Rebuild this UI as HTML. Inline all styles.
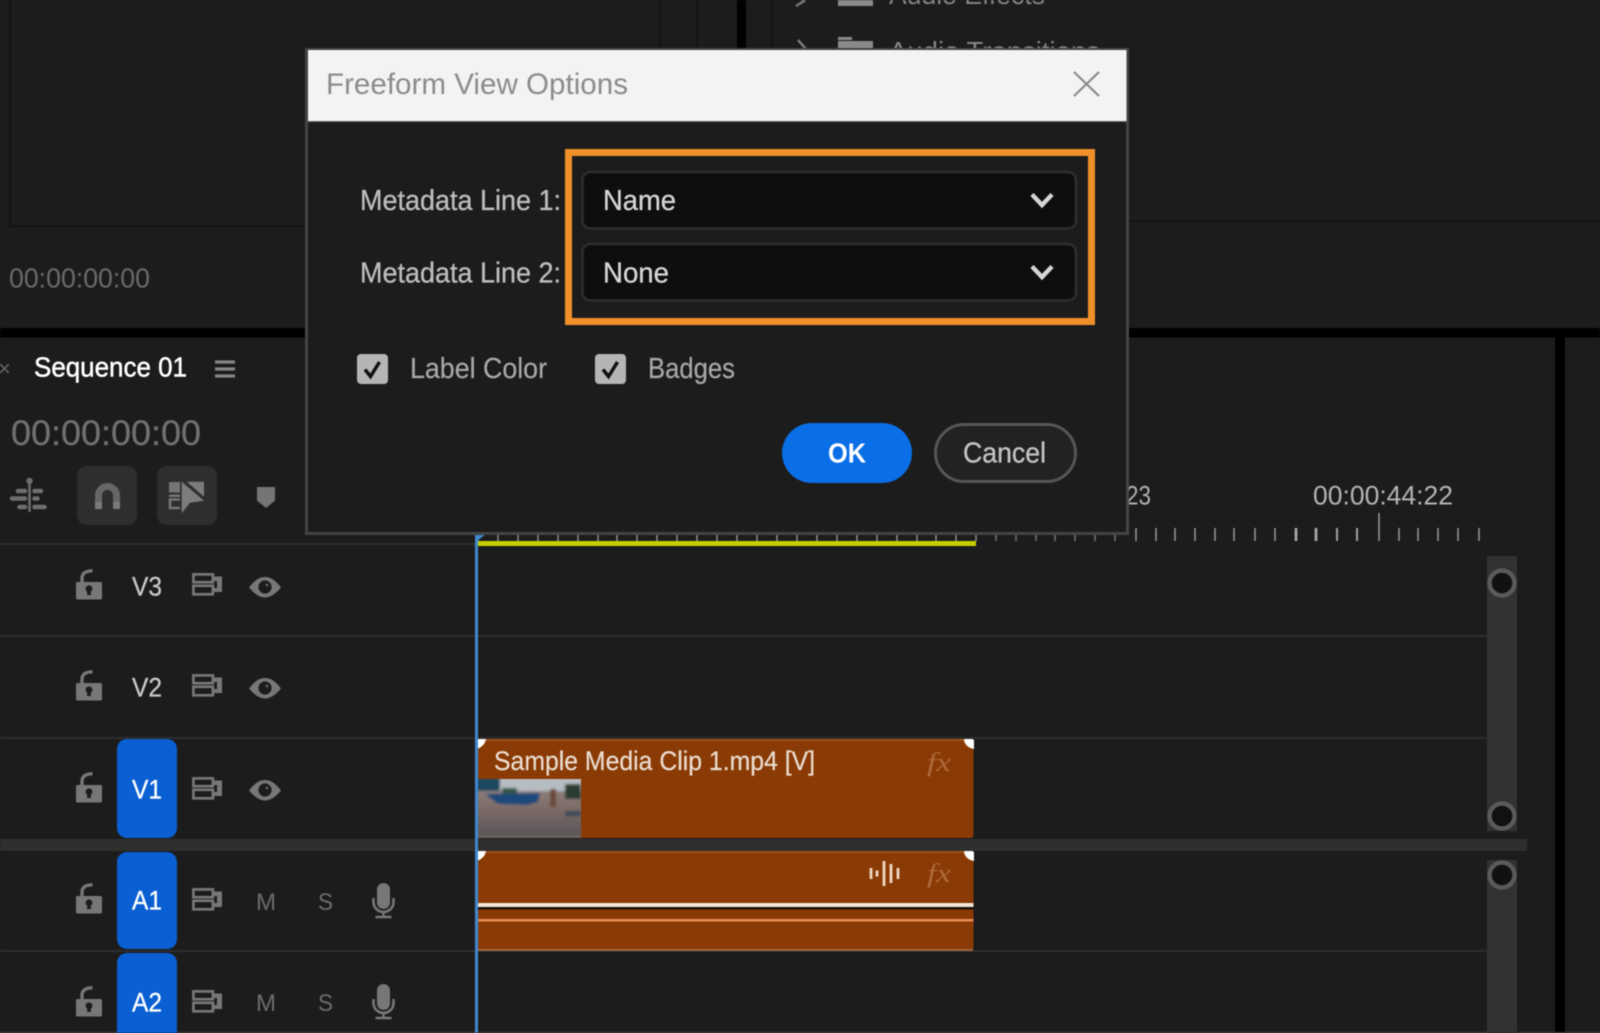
<!DOCTYPE html>
<html><head><meta charset="utf-8"><title>Freeform View Options</title>
<style>
html,body{margin:0;padding:0;background:#1c1c1c;width:1600px;height:1033px;overflow:hidden}
svg{display:block;filter:blur(.45px)}
text{font-family:"Liberation Sans",sans-serif}
</style></head><body>
<svg width="1600" height="1033" viewBox="0 0 1600 1033" xmlns="http://www.w3.org/2000/svg">
<defs>
<g id="lock"><path d="M6 14V9.500C6 4.500 9.500 1.800 16.500 1.800" fill="none" stroke="#777" stroke-width="3.400"/><rect x="0" y="13" width="26" height="17.500" rx="1.500" fill="#777"/><circle cx="13" cy="19.800" r="3.400" fill="#1c1c1c"/><path d="M11.500 20H14.500L15 26H11Z" fill="#1c1c1c"/></g>
<g id="sync"><g fill="none" stroke="#777" stroke-width="2.700"><rect x="1.400" y="1.400" width="19.500" height="7.800"/><rect x="1.400" y="12.800" width="19.500" height="8.500"/></g><path d="M20.500 3.500H30V19H20.500V15H25V8H20.500Z" fill="#777"/></g>
<g id="eye"><path d="M0 11C6 3 11 .5 16 .5C21 .5 26 3 32 11C26 18 21 21 16 21C11 21 6 18 0 11Z" fill="#777"/><circle cx="16" cy="10.500" r="6.600" fill="#1c1c1c"/><circle cx="18" cy="8.500" r="1.200" fill="#777"/></g>
<g id="mic"><rect x="5" y="0" width="13" height="26" rx="6.500" fill="#777"/><path d="M1.500 15V19A10 10 0 0 0 21.500 19V15" fill="none" stroke="#777" stroke-width="2.600"/><path d="M11.500 29V33.500M3.500 34H19.500" stroke="#777" stroke-width="2.400" fill="none"/></g>
<linearGradient id="gr" x1="0" y1="0" x2="0" y2="1"><stop offset="0" stop-color="#9a8d8c"/><stop offset=".5" stop-color="#7c6b66"/><stop offset=".88" stop-color="#5b5659"/><stop offset=".95" stop-color="#857668"/><stop offset="1" stop-color="#7a6c62"/></linearGradient>
<filter id="bl" x="-5%" y="-5%" width="110%" height="110%"><feGaussianBlur stdDeviation="1.300"/></filter>
<clipPath id="th"><rect x="478" y="779" width="103" height="59"/></clipPath>
</defs>

<rect width="1600" height="1033" fill="#1c1c1c"/>

<!-- top panels -->
<path d="M10 0V226H305" fill="none" stroke="#131313" stroke-width="2"/>
<rect x="659" y="0" width="2" height="50" fill="#131313"/>
<rect x="696" y="0" width="2" height="50" fill="#131313"/>
<rect x="771" y="0" width="2" height="50" fill="#131313"/>
<rect x="737" y="0" width="9" height="50" fill="#000"/>
<rect x="1127" y="220" width="473" height="2" fill="#151515"/>
<text x="9" y="287.500" font-size="28" fill="#6a6a6a" textLength="141" lengthAdjust="spacingAndGlyphs">00:00:00:00</text>

<!-- audio list behind dialog -->
<path d="M796 -5L804 1L796 6" fill="none" stroke="#777" stroke-width="2.500"/>
<rect x="838" y="-8" width="35" height="14" fill="#8a8a8a"/>
<text x="889" y="4" font-size="26" fill="#858585" textLength="156" lengthAdjust="spacingAndGlyphs">Audio Effects</text>
<path d="M798 40L806 49" fill="none" stroke="#777" stroke-width="2.500"/>
<rect x="838" y="41" width="35" height="12" fill="#8a8a8a"/><rect x="838" y="37" width="14" height="3" fill="#8a8a8a"/>
<text x="889" y="60" font-size="26" fill="#858585" textLength="211" lengthAdjust="spacingAndGlyphs">Audio Transitions</text>

<!-- dividers -->
<rect x="0" y="328" width="1600" height="9.500" fill="#000"/>
<rect x="1555" y="337" width="10" height="696" fill="#000"/>

<!-- timeline header -->
<text x="-2" y="376" font-size="22" fill="#666">×</text>
<text x="34" y="376.500" font-size="28" fill="#fff" stroke="#fff" stroke-width=".5" textLength="153" lengthAdjust="spacingAndGlyphs">Sequence 01</text>
<path d="M215 362H235M215 369H235M215 376H235" stroke="#858585" stroke-width="3.200"/>
<text x="11" y="445" font-size="35" fill="#707070" stroke="#707070" stroke-width=".3" textLength="190" lengthAdjust="spacingAndGlyphs">00:00:00:00</text>

<!-- tools -->
<rect x="77" y="466" width="60" height="59" rx="10" fill="#2e2e2e"/>
<rect x="157" y="466" width="60" height="59" rx="10" fill="#2e2e2e"/>
<path d="M29.500 480V512" stroke="#6e6e6e" stroke-width="2.500"/>
<circle cx="29.500" cy="481" r="3.200" fill="#6e6e6e"/>
<path d="M18 491H25M12 498.500H25M19.500 507H25M34.500 491H41M34.500 498.500H37.500M34.500 507H44.500" stroke="#6e6e6e" stroke-width="4.500" stroke-linecap="round" fill="none"/>
<path d="M98.500 509V495.500A9 9 0 0 1 116.500 495.500V509" fill="none" stroke="#666" stroke-width="7"/>
<path d="M98.500 509V502M116.500 509V502" fill="none" stroke="#7a7a7a" stroke-width="7"/>
<rect x="169" y="482" width="11" height="10.500" fill="#757575"/>
<rect x="169" y="494.500" width="11" height="2.500" fill="#757575"/>
<path d="M180 499.500H170V508H180" stroke="#757575" stroke-width="2.600" fill="none"/>
<path d="M181.700 481.700L204 500.700L190 502.700L181.700 513.300Z" fill="#7c7c7c"/>
<path d="M186.700 481.700H204V496.700Z" fill="#7c7c7c"/>
<path d="M257 487H275V500.500L266 508L257 500.500Z" fill="#757575"/>

<!-- ruler -->
<text x="1126" y="504.500" font-size="27" fill="#b0b0b0" textLength="25" lengthAdjust="spacingAndGlyphs">23</text>
<text x="1313" y="504.500" font-size="27" fill="#b4b4b4" textLength="140" lengthAdjust="spacingAndGlyphs">00:00:44:22</text>
<path d="M478 534v7M498 534v7M518 534v7M538 534v7M558 534v7M578 534v7M598 534v7M617 534v7M637 534v7M657 534v7M677 534v7M697 534v7M717 534v7M737 534v7M757 534v7M777 534v7M797 534v7M817 534v7M837 534v7M857 534v7M877 534v7M897 534v7M917 534v7M936 534v7M956 534v7M976 534v7" stroke="#8f8f8f" stroke-width="1.500"/>
<path d="M996 534v7M1016 534v7M1036 534v7M1055 534v7M1075 534v7M1095 534v7M1115 534v7" stroke="#777" stroke-width="1.500"/>
<path d="M1136 528v13M1156 528v13M1175 528v13M1195 528v13M1215 528v13M1234 528v13M1255 528v13M1275 528v13M1399 528v13M1418 528v13M1438 528v13M1458 528v13M1479 528v13M1379 513v28" stroke="#9a9a9a" stroke-width="1.500"/>
<path d="M1337 528v13M1357 528v13" stroke="#a0a0a0" stroke-width="2"/>
<path d="M1296 528v13M1316 528v13" stroke="#a5a5a5" stroke-width="2.800"/>
<rect x="477" y="541" width="499" height="5" fill="#c6d000"/>

<!-- track lines -->
<g fill="#2d2d2d">
<rect x="0" y="543" width="475" height="2"/>
<rect x="0" y="635" width="1487" height="2"/>
<rect x="0" y="737" width="1487" height="2"/>
<rect x="0" y="950" width="1487" height="2"/>
</g>
<rect x="0" y="839" width="1527" height="12" fill="#2f2f2f"/>
<rect x="0" y="1032" width="1600" height="1" fill="#4a4a4a"/>

<!-- scrollbar -->
<rect x="1487" y="556" width="30" height="275" fill="#323232"/>
<rect x="1487" y="860" width="30" height="173" fill="#323232"/>
<g fill="#111" stroke="#5a5a5a" stroke-width="4.500">
<circle cx="1502" cy="583" r="12.500"/>
<circle cx="1502" cy="816" r="12.500"/>
<circle cx="1502" cy="875" r="12.500"/>
</g>

<!-- clips -->
<path d="M477 739H970Q973.500 739 973.500 743V834Q973.500 838 970 838H477Z" fill="#8a3a04"/>
<rect x="477" y="739" width="496" height="2" fill="#9c5120"/>
<path d="M477 851H970Q973.500 851 973.500 855V947Q973.500 951 970 951H477Z" fill="#8a3a04"/>
<rect x="477" y="851" width="496" height="2" fill="#9c5120"/>
<rect x="477" y="949" width="496" height="2" fill="#a0673c"/>
<rect x="477" y="903" width="496.500" height="4" fill="#f3e6d8"/>
<rect x="477" y="907" width="496.500" height="2.500" fill="#1a0f05"/>
<rect x="477" y="919" width="496.500" height="2.500" fill="#e88c52"/>
<!-- thumbnail -->
<g clip-path="url(#th)"><g filter="url(#bl)">
<rect x="474" y="775" width="112" height="68" fill="url(#gr)"/>
<rect x="474" y="775" width="112" height="16" fill="#b6bdc2"/>
<rect x="474" y="775" width="26" height="16" fill="#1f4a5e"/>
<path d="M485 794L540 793L538 802L528 805L498 804Z" fill="#1d4a7a"/>
<rect x="502" y="788" width="15" height="6" fill="#36554c"/>
<rect x="565" y="784" width="16" height="15" fill="#2a3a30"/>
<rect x="550" y="789" width="6" height="18" fill="#6b4a3a"/>
<rect x="565" y="811" width="16" height="5" fill="#3a4a5a"/>
</g></g>
<text x="494" y="770" font-size="27" fill="#eadccf" stroke="#eadccf" stroke-width=".2" textLength="321" lengthAdjust="spacingAndGlyphs">Sample Media Clip 1.mp4 [V]</text>
<text x="927" y="771" font-size="26" font-style="italic" fill="#ad6a3a" style="font-family:'Liberation Serif',serif" textLength="24" lengthAdjust="spacingAndGlyphs">fx</text>
<text x="927" y="882" font-size="26" font-style="italic" fill="#ad6a3a" style="font-family:'Liberation Serif',serif" textLength="24" lengthAdjust="spacingAndGlyphs">fx</text>
<path d="M871 868v11M877 870.500v6M884 861v25M891 864v19M898 868v11" stroke="#f0d8c4" stroke-width="2.800"/>
<path d="M477 739H486C485 744 482 747 477 749Z" fill="#fff"/>
<path d="M477 851H486C485 856 482 859 477 861Z" fill="#fff"/>
<path d="M974 749V741C974 740 973 739 972 739H964C964 744 968 748 974 749Z" fill="#fff"/>
<path d="M974 861V853C974 852 973 851 972 851H964C964 856 968 860 974 861Z" fill="#fff"/>
<rect x="475" y="534" width="3" height="499" fill="#3f87cf"/>
<path d="M476 534H486L477 541Z" fill="#3f87cf"/>

<!-- track headers -->
<rect x="117" y="739" width="60" height="99" rx="10" fill="#0a5fd2"/>
<rect x="117" y="852" width="60" height="97" rx="10" fill="#0a5fd2"/>
<rect x="117" y="953" width="60" height="100" rx="10" fill="#0a5fd2"/>
<use href="#lock" x="76" y="569"/><use href="#lock" x="76" y="670"/><use href="#lock" x="76" y="772"/><use href="#lock" x="76" y="883"/><use href="#lock" x="76" y="986"/>
<use href="#sync" x="192" y="573"/><use href="#sync" x="192" y="674"/><use href="#sync" x="192" y="777"/><use href="#sync" x="192" y="888"/><use href="#sync" x="192" y="990"/>
<use href="#eye" x="249" y="576.500"/><use href="#eye" x="249" y="677.500"/><use href="#eye" x="249" y="779.500"/>
<use href="#mic" x="372" y="883"/><use href="#mic" x="372" y="984"/>
<g font-size="27">
<text x="132" y="595.500" fill="#c8c8c8" stroke="#c8c8c8" stroke-width=".3" textLength="30" lengthAdjust="spacingAndGlyphs">V3</text>
<text x="132" y="696.500" fill="#c8c8c8" stroke="#c8c8c8" stroke-width=".3" textLength="30" lengthAdjust="spacingAndGlyphs">V2</text>
<text x="132" y="798.500" fill="#fff" stroke="#fff" stroke-width=".3" textLength="30" lengthAdjust="spacingAndGlyphs">V1</text>
<text x="132" y="909.500" fill="#fff" stroke="#fff" stroke-width=".3" textLength="30" lengthAdjust="spacingAndGlyphs">A1</text>
<text x="132" y="1011.500" fill="#fff" stroke="#fff" stroke-width=".3" textLength="30" lengthAdjust="spacingAndGlyphs">A2</text>
</g>
<g font-size="24" fill="#6c6c6c">
<text x="256" y="910" textLength="20" lengthAdjust="spacingAndGlyphs">M</text>
<text x="256" y="1011" textLength="20" lengthAdjust="spacingAndGlyphs">M</text>
<text x="318" y="910" textLength="15" lengthAdjust="spacingAndGlyphs">S</text>
<text x="318" y="1011" textLength="15" lengthAdjust="spacingAndGlyphs">S</text>
</g>

<!-- dialog -->
<rect x="306.500" y="49.500" width="821" height="484" fill="#1c1c1c" stroke="#444" stroke-width="3"/>
<rect x="308" y="50" width="818.500" height="71" fill="#f3f3f3"/>
<rect x="308" y="121" width="818.500" height="1" fill="#666"/>
<text x="326" y="94" font-size="30" fill="#8c8c8c" textLength="302" lengthAdjust="spacingAndGlyphs">Freeform View Options</text>
<path d="M1074 72L1099 96M1099 72L1074 96" stroke="#8a8a8a" stroke-width="2.200" fill="none"/>

<text x="360" y="210" font-size="29" fill="#bdbdbd" stroke="#bdbdbd" stroke-width=".3" textLength="201" lengthAdjust="spacingAndGlyphs">Metadata Line 1:</text>
<text x="360" y="282.500" font-size="29" fill="#bdbdbd" stroke="#bdbdbd" stroke-width=".3" textLength="201" lengthAdjust="spacingAndGlyphs">Metadata Line 2:</text>

<rect x="582.500" y="172" width="493.500" height="56.500" rx="8" fill="#0e0e0e" stroke="#2e2e2e" stroke-width="2.500"/>
<rect x="582.500" y="244" width="493.500" height="56.500" rx="8" fill="#0e0e0e" stroke="#2e2e2e" stroke-width="2.500"/>
<text x="603" y="210" font-size="29" fill="#d6d6d6" stroke="#d6d6d6" stroke-width=".3" textLength="73" lengthAdjust="spacingAndGlyphs">Name</text>
<text x="603" y="282.500" font-size="29" fill="#d6d6d6" stroke="#d6d6d6" stroke-width=".3" textLength="66" lengthAdjust="spacingAndGlyphs">None</text>
<path d="M1032 194.500L1042 205L1052 194.500M1032 266.500L1042 277L1052 266.500" fill="none" stroke="#d6d6d6" stroke-width="4.400"/>

<rect x="568.500" y="152.500" width="523" height="169" fill="none" stroke="#f0902a" stroke-width="7"/>

<rect x="357" y="354" width="31" height="30" rx="4" fill="#b5b5b5"/>
<rect x="595" y="354" width="31" height="30" rx="4" fill="#b5b5b5"/>
<path d="M365 369.500L370.500 376.500L379.500 362M603 369.500L608.500 376.500L617.500 362" fill="none" stroke="#111" stroke-width="3.500"/>
<text x="410" y="378" font-size="29" fill="#a8a8a8" stroke="#a8a8a8" stroke-width=".2" textLength="137" lengthAdjust="spacingAndGlyphs">Label Color</text>
<text x="648" y="378" font-size="29" fill="#a8a8a8" stroke="#a8a8a8" stroke-width=".2" textLength="87" lengthAdjust="spacingAndGlyphs">Badges</text>

<rect x="782" y="423" width="130" height="60" rx="30" fill="#0a6ee6"/>
<text x="828" y="462.500" font-size="28" font-weight="bold" fill="#fff" textLength="38" lengthAdjust="spacingAndGlyphs">OK</text>
<rect x="935.500" y="424.500" width="140" height="57" rx="28.500" fill="#222" stroke="#565656" stroke-width="3"/>
<text x="963" y="462.500" font-size="29" fill="#c4c4c4" stroke="#c4c4c4" stroke-width=".3" textLength="83" lengthAdjust="spacingAndGlyphs">Cancel</text>
</svg>
</body></html>
